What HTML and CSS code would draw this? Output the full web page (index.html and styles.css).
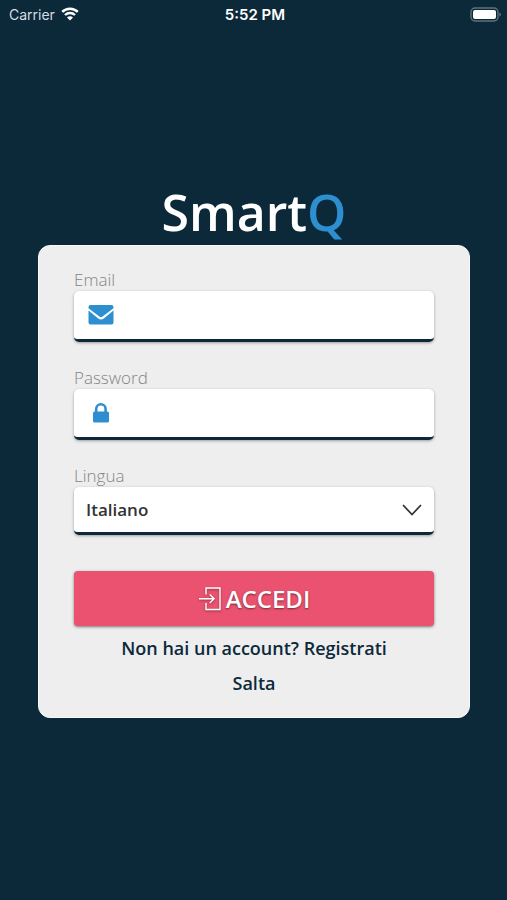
FILE: index.html
```html
<!DOCTYPE html>
<html lang="it">
<head>
    <meta charset="UTF-8">
    <meta name="viewport" content="width=device-width, initial-scale=1.0">
    <title>SmartQ</title>
    <link rel="stylesheet" href="styles.css">
</head>
<body>
    <header class="status-bar">
        <div class="carrier">
            <span>Carrier</span>
            <svg class="wifi" viewBox="0 0 18 14" width="18" height="14">
                <path d="M1.2 4.9a11.2 11.2 0 0 1 15.6 0" fill="none" stroke="#fff" stroke-width="2.6"/>
                <path d="M4 8a7.2 7.2 0 0 1 10 0" fill="none" stroke="#fff" stroke-width="2.4"/>
                <path d="M9 13.6L6 10.6a4.2 4.2 0 0 1 6 0z" fill="#fff"/>
            </svg>
        </div>
        <div class="time">5:52 PM</div>
        <div class="battery">
            <svg viewBox="0 0 31 15" width="31" height="15">
                <rect x="1" y="1" width="27" height="13" rx="4" fill="none" stroke="#60717c" stroke-width="1.4"/>
                <rect x="3" y="3" width="23" height="9" rx="2" fill="#fff"/>
                <path d="M29.4 5.4q1.6.6 1.6 2.1t-1.6 2.1z" fill="#60717c"/>
            </svg>
        </div>
    </header>

    <main class="login">
        <h1 class="logo">Smart<span class="logo-q">Q</span></h1>

        <form class="card">
            <label class="field-label" for="email">Email</label>
            <div class="field">
                <svg viewBox="0 0 26 20" width="26" height="20">
                    <path d="M2.5 0h21a2 2 0 0 1 2 2v1.200L14.600 11.500q-1.600 1.200-3.200 0L.5 3.200V2a2 2 0 0 1 2-2z" fill="#2e8fd0"/>
                    <path d="M.5 5.600l9.700 7.800q2.800 2 5.600 0l9.700-7.800V17.500a2 2 0 0 1-2 2h-21a2 2 0 0 1-2-2z" fill="#2e8fd0"/>
                </svg>
                <input type="email" id="email" name="email">
            </div>

            <label class="field-label" for="password">Password</label>
            <div class="field">
                <svg viewBox="0 0 26 20" width="26" height="20">
                    <path d="M8.200 9V6a4.700 4.700 0 0 1 9.400 0v3" fill="none" stroke="#2e8fd0" stroke-width="2.600"/>
                    <rect x="5" y="8.500" width="16" height="11" rx="1.600" fill="#2e8fd0"/>
                </svg>
                <input type="password" id="password" name="password">
            </div>

            <label class="field-label" for="lingua">Lingua</label>
            <div class="field field-select">
                <select id="lingua" name="lingua">
                    <option>Italiano</option>
                </select>
                <svg viewBox="0 0 20 12" width="20" height="12">
                    <path d="M1 1l9 9.500L19 1" fill="none" stroke="#333" stroke-width="1.700"/>
                </svg>
            </div>

            <button type="submit" class="btn-login">
                <svg viewBox="0 0 24 24" width="24" height="24">
                    <path d="M8 7.500V1h14v21.500H8V16M1 11.800h15M11.800 7.500l4.300 4.300-4.300 4.300" fill="none" stroke="#fff" stroke-width="1.400"/>
                </svg>
                <span>ACCEDI</span>
            </button>

            <a class="link" href="#registrati">Non hai un account? Registrati</a>
            <a class="link" href="#salta">Salta</a>
        </form>
    </main>
</body>
</html>
```

FILE: styles.css
```css
* {
    box-sizing: border-box;
}
body {
    margin: 0;
    min-height: 100vh;
    background-color: #0c293a;
    color: white;
    font-family: "Open Sans", "Noto Sans", sans-serif;
}
.status-bar {
    display: grid;
    grid-template-columns: 1fr auto 1fr;
    align-items: center;
    height: 28px;
    padding: 0 6px 0 9px;
    font-family: Inter, "Liberation Sans", sans-serif;
    font-size: 14px;
}
.carrier {
    display: flex;
    align-items: center;
    gap: 6px;
    color: #d5dce0;
}
.time {
    font-size: 15px;
    font-weight: 600;
}
.battery {
    display: flex;
    justify-content: flex-end;
}
.login {
    padding: 152px 37px 32px 38px;
}
.logo {
    margin: 0;
    font-size: 50px;
    line-height: 65px;
    font-weight: 600;
    text-align: center;
}
.logo-q {
    color: #2e8fd0;
}
.card {
    display: flex;
    flex-direction: column;
    padding: 23px 35px 16px;
    background-color: #eee;
    border: 1px solid #f8f8f8;
    border-radius: 12px;
}
.field-label {
    color: #858585;
    font-size: 17px;
    line-height: 22px;
    font-weight: 300;
}
.field {
    display: flex;
    align-items: center;
    gap: 12px;
    height: 51px;
    margin-bottom: 25px;
    padding: 0 14px;
    background-color: white;
    border-bottom: 3px solid #0c293a;
    border-radius: 5px;
    box-shadow: 0 1px 3px rgba(0, 0, 0, 0.35);
}
.field input,
.field select {
    flex: 1;
    min-width: 0;
    height: 100%;
    padding: 0;
    border: none;
    outline: none;
    background: none;
    color: #333;
    font-family: inherit;
    font-size: 17px;
}
.field select {
    appearance: none;
    font-weight: 600;
}
.field-select {
    height: 48px;
    padding: 0 12px;
    margin-bottom: 36px;
}
.btn-login {
    display: flex;
    align-items: center;
    justify-content: center;
    gap: 4px;
    height: 55px;
    margin-bottom: 5px;
    border: none;
    border-radius: 4px;
    background-color: #ea526f;
    box-shadow: 0 1px 3px rgba(0, 0, 0, 0.5);
    color: white;
    font-family: inherit;
    font-size: 24px;
    font-weight: 600;
    text-shadow: 0 1px 2px rgba(0, 0, 0, 0.5);
    cursor: pointer;
}
.btn-login svg {
    filter: drop-shadow(0 1px 1px rgba(0, 0, 0, 0.4));
}
.link {
    align-self: center;
    color: #0c293a;
    font-size: 18px;
    line-height: 35px;
    font-weight: 600;
    text-decoration: none;
}
```
